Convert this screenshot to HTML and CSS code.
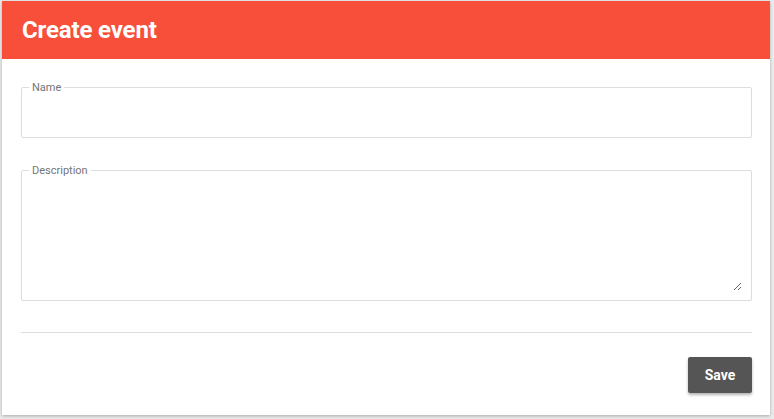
FILE: index.html
```html
<!DOCTYPE html>
<html lang="en">
<head>
<meta charset="utf-8">
<title>Create event</title>
<link rel="stylesheet" href="styles.css">
</head>
<body>
<div class="card">
  <div class="card-header">
    <h1 class="title">Create event</h1>
  </div>
  <form class="card-body">
    <fieldset class="field field-name">
      <legend class="field-label">Name</legend>
      <input class="field-input" type="text">
    </fieldset>
    <fieldset class="field field-desc">
      <legend class="field-label">Description</legend>
      <textarea class="field-textarea"></textarea>
    </fieldset>
    <hr class="divider">
    <div class="actions">
      <button class="btn-save" type="button">Save</button>
    </div>
  </form>
</div>
</body>
</html>
```
FILE: styles.css
```css
* { box-sizing: border-box; }
html, body { margin: 0; padding: 0; }
body {
  background: #ebebeb;
  font-family: Roboto, "Liberation Sans", Arial, sans-serif;
  padding: 1px 4px 4px 2px;
  width: 774px;
  height: 419px;
  overflow: hidden;
}
.card {
  width: 768px;
  height: 414px;
  background: #fff;
  box-shadow: 0 1px 3px rgba(0,0,0,0.28);
  display: flex;
  flex-direction: column;
}
.card-header {
  height: 58px;
  background: #f84f3b;
  display: flex;
  align-items: center;
  padding-left: 20px;
}
.title {
  margin: 0;
  color: #fff;
  font-size: 24px;
  font-weight: 700;
  line-height: 28px;
  letter-spacing: -0.15px;
}
.card-body {
  padding: 22px 18px 22px 19px;
  display: flex;
  flex-direction: column;
}
.field {
  margin: 0;
  border: 1px solid #dddddd;
  border-radius: 2px;
  padding: 0 9px 9px 10px;
  min-width: 0;
}
.field-label {
  font-size: 11px;
  line-height: 12px;
  color: #757575;
  padding: 1px 3px 0 3px;
  margin-left: -3px;
}
.field-name { height: 57px; }
.field-desc { height: 137px; margin-top: 26px; }
.field-input {
  display: block;
  width: 100%;
  height: 34px;
  border: none;
  outline: none;
  font: inherit;
  font-size: 14px;
  padding: 0;
  background: transparent;
}
.field-textarea {
  display: block;
  width: 100%;
  height: 114px;
  border: none;
  outline: none;
  font: inherit;
  font-size: 14px;
  padding: 0;
  resize: vertical;
  background: transparent;
}
.divider {
  margin: 31px 0 0;
  border: none;
  border-top: 1px solid #dddddd;
  height: 0;
}
.actions {
  margin-top: 24px;
  display: flex;
  justify-content: flex-end;
}
.btn-save {
  width: 64px;
  height: 36px;
  border: none;
  border-radius: 2px;
  background: #555555;
  color: #fff;
  font-family: Roboto, "Liberation Sans", Arial, sans-serif;
  font-size: 14px;
  font-weight: 700;
  box-shadow: 0 2px 3px rgba(0,0,0,0.3);
  cursor: pointer;
}
```
